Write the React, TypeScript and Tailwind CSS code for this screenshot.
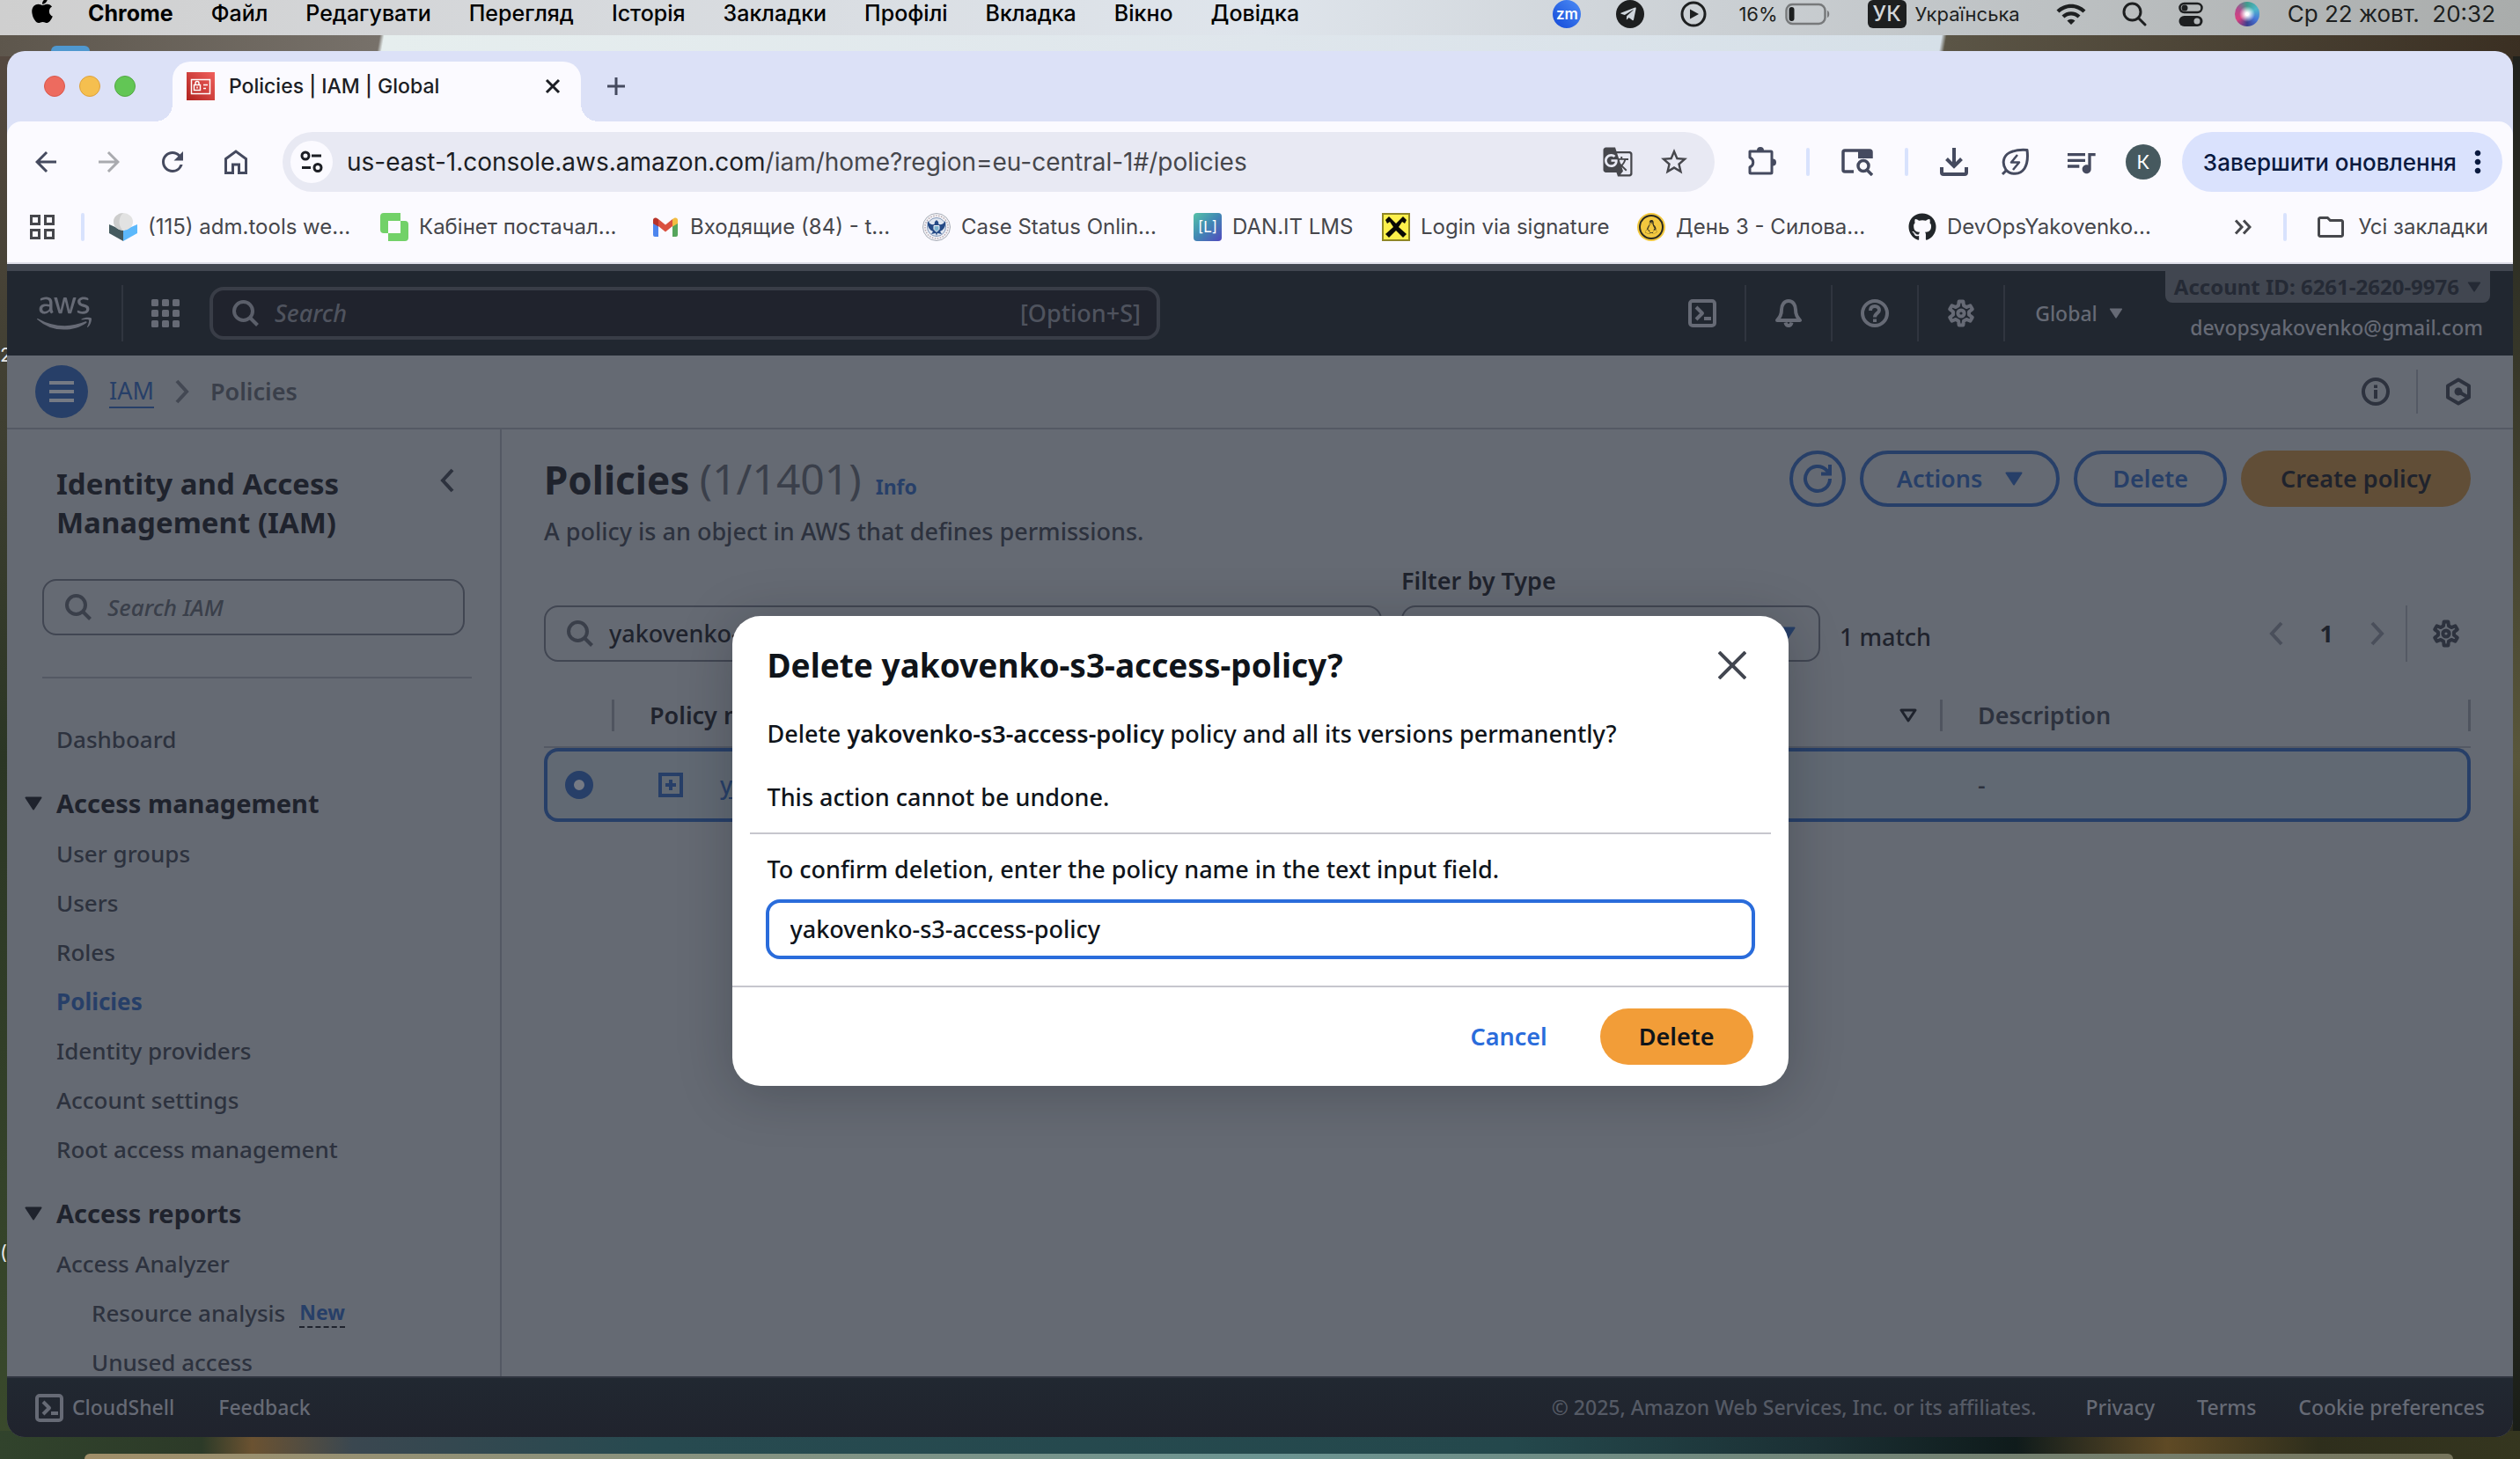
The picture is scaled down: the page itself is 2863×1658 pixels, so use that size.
import React from 'react';
import { FaApple, FaAws, FaGithub, FaLinux, FaTelegramPlane } from 'react-icons/fa';
import {
  MdArrowBack,
  MdArrowForward,
  MdGTranslate,
  MdMoreVert,
  MdOutlineFolder,
  MdQueueMusic,
  MdRefresh,
  MdStarBorder,
  MdWifi,
} from 'react-icons/md';

type IconProps = { className?: string };

const ember = 'font-["Noto_Sans",sans-serif]';
const system = 'font-["Inter",sans-serif]';

function gearPath() {
  const points: string[] = [];
  for (let i = 0; i < 6; i++) {
    for (const [offset, radius] of [[-19, 9.2], [-10, 13.6], [10, 13.6], [19, 9.2]]) {
      const angle = ((i * 60 + offset - 90) * Math.PI) / 180;
      points.push(`${(16 + radius * Math.cos(angle)).toFixed(2)} ${(16 + radius * Math.sin(angle)).toFixed(2)}`);
    }
  }
  return `M${points.join('L')}Z`;
}
const GEAR = gearPath();

const Gear = ({ className }: IconProps) => (
  <svg viewBox="0 0 32 32" className={className} fill="none" stroke="currentColor" strokeWidth="4" strokeLinejoin="round">
    <path d={GEAR} />
    <circle cx="16" cy="16" r="3.6" />
  </svg>
);
const Magnifier = ({ className }: IconProps) => (
  <svg viewBox="0 0 30 30" className={className} fill="none" stroke="currentColor" strokeWidth="4">
    <circle cx="12.5" cy="12.5" r="10.5" />
    <path d="M19.5 19.5L28.5 28.5" />
  </svg>
);
const Caret = ({ className }: IconProps) => (
  <svg viewBox="0 0 20 16" className={className} fill="currentColor" stroke="currentColor" strokeWidth="2" strokeLinejoin="round">
    <path d="M1.5 1.5H18.5L10 14.5Z" />
  </svg>
);
const Chevron = ({ className, left }: IconProps & { left?: boolean }) => (
  <svg viewBox="0 0 16 28" className={className} fill="none" stroke="currentColor" strokeWidth="4">
    <path d={left ? 'M14 2L3 14L14 26' : 'M2 2L13 14L2 26'} />
  </svg>
);
const Shell = ({ className }: IconProps) => (
  <svg viewBox="0 0 32 32" className={className} fill="none" stroke="currentColor" strokeWidth="4" strokeLinejoin="round">
    <rect x="2" y="2" width="28" height="28" rx="3" />
    <path d="M9 9L16 16L9 23M18 22H26" />
  </svg>
);
const Bell = ({ className }: IconProps) => (
  <svg viewBox="0 0 32 32" className={className} fill="none" stroke="currentColor" strokeWidth="4" strokeLinejoin="round">
    <path d="M8 12C8 6.500 11 2 16 2S24 6.500 24 12C24 18 26 20.500 29 24H3C6 20.500 8 18 8 12Z" />
    <path d="M12.500 26.500C13 29 14.500 30 16 30S19 29 19.500 26.500" />
  </svg>
);
const Help = ({ className }: IconProps) => (
  <svg viewBox="0 0 32 32" className={className} fill="none" stroke="currentColor" strokeWidth="4">
    <circle cx="16" cy="16" r="14" />
    <path d="M11 13C11 9.500 13 8 16 8S21 10 21 12.500C21 16 16 16 16 20.500" />
    <path d="M16 22.500V26" />
  </svg>
);
const Info = ({ className }: IconProps) => (
  <svg viewBox="0 0 32 32" className={className} fill="none" stroke="currentColor" strokeWidth="4">
    <circle cx="16" cy="16" r="14" />
    <path d="M16 14V24M16 8.500V12" />
  </svg>
);
const Hexagon = ({ className }: IconProps) => (
  <svg viewBox="0 0 32 32" className={className} fill="none" stroke="currentColor" strokeWidth="4" strokeLinejoin="round">
    <path d="M16 2.500L28 9.500V22.500L16 29.500L4 22.500V9.500Z" />
    <circle cx="16" cy="16" r="4.500" fill="currentColor" stroke="none" />
    <path d="M16 16L27 22.500" />
  </svg>
);
const Reload = ({ className }: IconProps) => (
  <svg viewBox="0 0 34 34" className={className} fill="none" stroke="currentColor" strokeWidth="4">
    <path d="M31 17A14 14 0 1 1 27 7.200L31 11" />
    <path d="M31 1V11.500H21" />
  </svg>
);

const menus = ['Файл', 'Редагувати', 'Перегляд', 'Історія', 'Закладки', 'Профілі', 'Вкладка', 'Вікно', 'Довідка'];

function MenuBar() {
  return (
    <div className={`relative flex h-10 shrink-0 items-start bg-linear-to-r from-[#cfcfcf] via-[#dfe5ec] to-[#a9acab] pr-7 pl-8 text-[25px] leading-[30px] text-black ${system}`}>
      <FaApple className="-mt-1 mr-9 size-8 shrink-0" />
      <div className="flex gap-[43px] font-medium">
        <span className="font-bold">Chrome</span>
        {menus.map((m) => (
          <span key={m}>{m}</span>
        ))}
      </div>
      <div className="ml-auto flex h-8 items-center text-[#1d1f20]">
        <span className="grid size-8 place-items-center rounded-full bg-linear-to-bl from-[#4e8cf5] to-[#1547d8] text-[17px] font-semibold text-white">zm</span>
        <span className="ml-10 grid size-8 place-items-center rounded-full bg-[#1d1f20] text-[#cfd6dd]">
          <FaTelegramPlane className="mr-1 size-5" />
        </span>
        <svg viewBox="0 0 30 30" className="ml-[41px] size-[30px]" fill="none" stroke="currentColor" strokeWidth="3">
          <circle cx="15" cy="15" r="13" />
          <path d="M11 9.500L21 15L11 20.500Z" fill="currentColor" stroke="none" />
        </svg>
        <span className="ml-9 text-[22px]">16%</span>
        <svg viewBox="0 0 52 26" className="ml-2 h-[26px] w-[52px]" fill="none">
          <rect x="1.500" y="2" width="44" height="22" rx="7" stroke="#77797b" strokeWidth="2.500" />
          <rect x="4.500" y="5" width="6" height="16" rx="3" fill="#1d1f20" />
          <path d="M48 9C51 10 51 16 48 17Z" fill="#77797b" />
        </svg>
        <span className="ml-[42px] grid h-8 w-11 place-items-center rounded-md bg-[#1d1f20] text-[24px] font-medium text-[#d3d6d9]">УК</span>
        <span className="ml-[10px] text-[22px]">Українська</span>
        <MdWifi className="mr-1 ml-10 size-9" />
        <svg viewBox="0 0 28 28" className="ml-9 size-7" fill="none" stroke="currentColor" strokeWidth="3" strokeLinecap="round">
          <circle cx="11.500" cy="11.500" r="9.500" />
          <path d="M18.500 18.500L26 26" />
        </svg>
        <svg viewBox="0 0 28 28" className="ml-9 size-7" fill="none" stroke="currentColor" strokeWidth="2.500">
          <rect x="1.500" y="2" width="25" height="10" rx="5" />
          <circle cx="7" cy="7" r="3.500" fill="currentColor" stroke="none" />
          <rect x="0.500" y="16" width="27" height="12" rx="6" fill="currentColor" stroke="none" />
          <circle cx="21" cy="22" r="3.500" fill="#b3b7b9" stroke="none" />
        </svg>
        <span className="ml-9 size-7 rounded-full bg-[radial-gradient(circle,#ffffff_8%,transparent_45%),conic-gradient(#3f9d8d,#4fb7c9,#4676d8,#3a3f8f,#d8407f,#b14b8e,#3f9d8d)]" />
        <span className="ml-8 text-[26px] whitespace-pre">Ср 22 жовт.  20:32</span>
      </div>
    </div>
  );
}

function TabStrip() {
  return (
    <div className="flex h-20 shrink-0 items-end bg-[#dce1f7]">
      <div className="flex h-20 w-42 items-center gap-4 pl-[42px]">
        <button aria-label="Закрити вікно" className="size-6 rounded-full border border-[#d9584c] bg-[#ed6b5f]" />
        <button aria-label="Згорнути" className="size-6 rounded-full border border-[#dea13c] bg-[#f5bf4f]" />
        <button aria-label="Розгорнути" className="size-6 rounded-full border border-[#52a842] bg-[#62c655]" />
      </div>
      <span className="size-5 bg-[radial-gradient(circle_at_0_0,transparent_20px,#fbfaff_20px)]" />
      <div className="flex h-[68px] w-[464px] items-center rounded-t-[20px] bg-[#fbfaff] pr-5 pb-3 pl-4">
        <svg viewBox="0 0 32 32" className="mr-4 size-8" fill="none" stroke="#fff" strokeWidth="1.500">
          <defs>
            <linearGradient id="iam" x1="0" y1="1" x2="1" y2="0">
              <stop offset="0" stopColor="#b0221f" />
              <stop offset="1" stopColor="#f0605c" />
            </linearGradient>
          </defs>
          <rect width="32" height="32" fill="url(#iam)" stroke="none" />
          <rect x="5.500" y="8.500" width="21" height="16" />
          <rect x="8.500" y="14.500" width="7" height="6" />
          <path d="M10 14.500V12.500A2 2 0 0 1 14 12.500V14.500M19 14.500H24M19 18.500H22M12 16.500V18.500" />
        </svg>
        <span className="text-[23px] font-medium text-[#1c1e24]">Policies | IAM | Global</span>
        <button aria-label="Закрити вкладку" className="ml-auto grid size-6 place-items-center text-[#1c1e24]">
          <svg viewBox="0 0 18 18" className="size-[18px]" stroke="currentColor" strokeWidth="3">
            <path d="M2 2L16 16M16 2L2 16" />
          </svg>
        </button>
      </div>
      <span className="size-5 bg-[radial-gradient(circle_at_100%_0,transparent_20px,#fbfaff_20px)]" />
      <button aria-label="Нова вкладка" className="grid h-20 w-10 place-items-center text-[#454a5f]">
        <svg viewBox="0 0 20 20" className="size-5" stroke="currentColor" strokeWidth="3">
          <path d="M10 0V20M0 10H20" />
        </svg>
      </button>
    </div>
  );
}

function Toolbar() {
  return (
    <div className="flex h-[92px] items-center rounded-t-[16px] bg-[#fbfaff] pr-3 pl-6 text-[#454a5f]">
      <button aria-label="Назад" className="grid w-10 place-items-center"><MdArrowBack className="size-9" /></button>
      <button aria-label="Вперед" className="ml-8 grid w-10 place-items-center text-[#a9aaaf]"><MdArrowForward className="size-9" /></button>
      <button aria-label="Оновити" className="ml-8 grid w-10 place-items-center"><MdRefresh className="size-9" /></button>
      <button aria-label="Головна" className="ml-8 grid w-10 place-items-center">
        <svg viewBox="0 0 28 30" className="h-[30px] w-7" fill="none" stroke="currentColor" strokeWidth="3">
          <path d="M2.500 11.500L14 3L25.500 11.500V27.500H17.500V18H10.500V27.500H2.500Z" />
        </svg>
      </button>
      <div className="ml-[33px] flex h-[68px] flex-1 items-center rounded-full bg-[#e8e9f3] pr-7 pl-[9px] text-[#46474c]">
        <button aria-label="Відомості про сайт" className="grid size-12 place-items-center rounded-full bg-[#fbfaff] text-[#1c1e24]">
          <svg viewBox="0 0 26 26" className="size-[26px]" fill="none" stroke="currentColor" strokeWidth="3">
            <circle cx="6" cy="6" r="4" />
            <path d="M13 6H24M2 19.500H12" />
            <circle cx="20" cy="19.500" r="4" />
          </svg>
        </button>
        <div role="textbox" aria-label="Адреса" className="ml-4 flex-1 text-[28px]">
          <span className="text-[#1c1e24]">us-east-1.console.aws.amazon.com</span>/iam/home?region=eu-central-1#/policies
        </div>
        <button aria-label="Перекласти"><MdGTranslate className="size-9" /></button>
        <button aria-label="Додати закладку" className="ml-7"><MdStarBorder className="size-9" /></button>
      </div>
      <button aria-label="Розширення" className="ml-9">
        <svg viewBox="0 0 36 36" className="size-9" fill="none" stroke="currentColor" strokeWidth="3" strokeLinejoin="round">
          <path d="M4 6H28Q29 6 29 7V30Q29 31 28 31H5Q4 31 4 30V24C9 22 9 15 4 13Z" />
          <path d="M12 5A4 4 0 0 1 20 5ZM30 14.500A4 4 0 0 1 30 22.500Z" fill="currentColor" stroke="none" />
        </svg>
      </button>
      <span className="ml-8 h-8 w-1 rounded bg-[#d8e2fd]" />
      <button aria-label="Пошук на бічній панелі" className="ml-9">
        <svg viewBox="0 0 36 32" className="h-8 w-9" fill="none" stroke="currentColor" strokeWidth="3.500">
          <path d="M14 27H4Q2 27 2 25V5Q2 3 4 3H32Q34 3 34 5V12" />
          <path d="M19 2H34V12H19Z" fill="currentColor" stroke="none" />
          <circle cx="25" cy="20.500" r="6" />
          <path d="M29 25L35 31" />
        </svg>
      </button>
      <span className="ml-9 h-8 w-1 rounded bg-[#d8e2fd]" />
      <button aria-label="Завантаження" className="ml-9">
        <svg viewBox="0 0 32 32" className="size-8" fill="none" stroke="currentColor" strokeWidth="4">
          <path d="M16 0V20M7.500 12.500L16 21L24.500 12.500M2 22V28Q2 30 4 30H28Q30 30 30 28V22" />
        </svg>
      </button>
      <button aria-label="Заощадження енергії" className="ml-9">
        <svg viewBox="0 0 36 36" className="size-9" fill="none" stroke="currentColor" strokeWidth="3" strokeLinejoin="round">
          <path d="M31 4.500C32 12 32 19 28 25.500C23 33 12 33 7 27C2 20 4 11 11 7.500C17 4.500 24 4 31 4.500Z" />
          <path d="M3 32L8 27" />
          <path d="M20 10L13 18.500H22L15 27" strokeWidth="2.500" />
        </svg>
      </button>
      <button aria-label="Керування медіа" className="ml-9"><MdQueueMusic className="size-10" /></button>
      <button aria-label="Профіль" className="ml-[31px] grid size-10 place-items-center rounded-full bg-[#46595f] text-[22px] text-white">К</button>
      <button className="ml-6 flex h-[68px] items-center rounded-full bg-[#dae2fd] pr-2 pl-6 text-[26px] font-medium text-[#0a1a3f]">
        Завершити оновлення
        <MdMoreVert className="ml-1 size-10" />
      </button>
    </div>
  );
}

function SealIcon() {
  return (
    <svg viewBox="0 0 32 32" className="size-8" fill="none">
      <circle cx="16" cy="16" r="15.500" fill="#f3f4f7" stroke="#a8adb8" />
      <circle cx="16" cy="16" r="13" stroke="#b9a9b1" strokeWidth="1.500" strokeDasharray="1.500 1.500" />
      <circle cx="16" cy="16" r="10.500" fill="#dfe6f0" stroke="#8296b8" />
      <path d="M6 9C8 13 11 13.500 13.500 13L14 10L16 8L18 10L18.500 13C21 13.500 24 13 26 9C27 14 25 19 20 21L22 24L17 23L16 26L15 23L10 24L12 21C7 19 5 14 6 9Z" fill="#254a86" />
      <path d="M13 14.500H19V18.500L16 21.500L13 18.500Z" fill="#7fb3cf" stroke="#f3f4f7" />
    </svg>
  );
}

const bookmarks: { label: string; width: string; icon: React.ReactNode }[] = [
  {
    label: '(115) adm.tools we...',
    width: 'w-[308px]',
    icon: (
      <svg viewBox="0 0 32 32" className="size-8">
        <path d="M0 13L16 20V32L0 23Z" fill="#455a5f" />
        <path d="M32 13L16 20V32L32 23Z" fill="#5cb8fb" />
        <ellipse cx="16" cy="10" rx="11" ry="10" fill="#e2e2e2" />
        <path d="M16 0A11 10 0 0 0 16 20C10 15 10 5 16 0Z" fill="#cdcdcd" />
      </svg>
    ),
  },
  {
    label: 'Кабінет постачал...',
    width: 'w-[308px]',
    icon: (
      <svg viewBox="0 0 32 32" className="size-8">
        <path d="M4 0H23V9H28Q32 9 32 13V28Q32 32 28 32H9V23H4Q0 23 0 19V4Q0 0 4 0Z" fill="#72d168" />
        <rect x="9" y="9" width="14" height="14" fill="#fbfaff" />
      </svg>
    ),
  },
  {
    label: 'Входящие (84) - t...',
    width: 'w-[308px]',
    icon: (
      <svg viewBox="0 0 32 32" className="size-8">
        <path d="M2 8L8 12V27H4Q2 27 2 25Z" fill="#4d85ee" />
        <path d="M30 8L24 12V27H28Q30 27 30 25Z" fill="#56a55c" />
        <path d="M8 7L16 13.500L24 7V15L16 21.500L8 15Z" fill="#da5140" />
        <path d="M2 12V8C2 5 5.500 4.500 8 7V15.500Z" fill="#b8332a" />
        <path d="M30 12V8C30 5 26.500 4.500 24 7V15.500Z" fill="#f2bd42" />
      </svg>
    ),
  },
  { label: 'Case Status Onlin...', width: 'w-[308px]', icon: <SealIcon /> },
  {
    label: 'DAN.IT LMS',
    width: 'w-[214px]',
    icon: <span className="grid size-8 place-items-center rounded bg-linear-to-br from-[#57c2a6] via-[#4186b4] to-[#4f46bd] text-[17px] leading-none text-white">[L]</span>,
  },
  {
    label: 'Login via signature',
    width: 'w-[290px]',
    icon: (
      <svg viewBox="0 0 32 32" className="size-8">
        <rect x="1" y="1" width="30" height="30" fill="#fdf04b" stroke="#8f8626" strokeWidth="2" />
        <path d="M8 4L16 12L24 4L28 8L26 12L23 10L19 16L28 24L24 28L16 20L8 28L4 24L13 16L9 10L6 12L4 8Z" fill="#0a0a05" />
      </svg>
    ),
  },
  {
    label: 'День 3 - Силова...',
    width: 'w-[308px]',
    icon: (
      <span className="grid size-8 place-items-center rounded-full bg-[#f2c83f]">
        <span className="grid size-7 place-items-center rounded-full border-2 border-[#2a2a20]">
          <FaLinux className="size-4 text-[#2a2a20]" />
        </span>
      </span>
    ),
  },
  { label: 'DevOpsYakovenko...', width: 'w-[308px]', icon: <FaGithub className="size-8 text-[#22262a]" /> },
];

function BookmarksBar() {
  return (
    <div className="flex h-[70px] items-center border-b-2 border-[#dfdfe9] bg-[#fbfaff] pr-7 pb-3 pl-[26px] text-[24px] text-[#46474c]">
      <button aria-label="Групи вкладок">
        <svg viewBox="0 0 28 28" className="size-7" fill="none" stroke="currentColor" strokeWidth="3">
          <path d="M1.500 1.500H10.500V10.500H1.500ZM17.500 1.500H26.500V10.500H17.500ZM1.500 17.500H10.500V26.500H1.500ZM17.500 17.500H26.500V26.500H17.500Z" />
        </svg>
      </button>
      <span className="mr-7 ml-[30px] h-8 w-1 rounded bg-[#d8e2fd]" />
      {bookmarks.map((b) => (
        <a key={b.label} href="#bookmark" className={`flex shrink-0 items-center gap-3 whitespace-nowrap ${b.width}`}>
          <span className="shrink-0">{b.icon}</span>
          {b.label}
        </a>
      ))}
      <button aria-label="Інші закладки" className="ml-auto">
        <svg viewBox="0 0 20 18" className="h-[18px] w-5" fill="none" stroke="currentColor" strokeWidth="3">
          <path d="M2 1.500L9 9L2 16.500M11 1.500L18 9L11 16.500" />
        </svg>
      </button>
      <span className="mr-8 ml-9 h-8 w-1 rounded bg-[#d8e2fd]" />
      <button className="flex items-center gap-[14px] whitespace-nowrap">
        <MdOutlineFolder className="size-9" />
        Усі закладки
      </button>
    </div>
  );
}

function ConsoleNav() {
  const cell = 'grid h-16 w-[98px] place-items-center border-r-2 border-[#30353f]';
  return (
    <header className="flex h-26 shrink-0 items-center border-t-8 border-[#414650] bg-[#212730] pr-[26px] pl-[34px] text-[#666a75]">
      <a href="#home" aria-label="aws"><FaAws className="h-[50px] w-[62px]" /></a>
      <span className="ml-[34px] h-16 w-0.5 bg-[#30353f]" />
      <button aria-label="Services" className="ml-8">
        <svg viewBox="0 0 32 32" className="size-8" fill="currentColor">
          {[0, 12, 24].map((y) => [0, 12, 24].map((x) => <rect key={`${x}-${y}`} x={x} y={y} width="8" height="8" rx="1.500" />))}
        </svg>
      </button>
      <label className="ml-[34px] flex h-15 w-[1080px] items-center rounded-2xl border-4 border-[#393d47] bg-[#20232d] pr-[18px] pl-[22px] text-[27px] text-[#4f535e]">
        <Magnifier className="size-[30px] shrink-0 text-[#5b5f6a]" />
        <input aria-label="Search" placeholder="Search" className="ml-[18px] min-w-0 flex-1 bg-transparent italic outline-none placeholder:text-[#4f535e]" />
        [Option+S]
      </label>
      <div className="ml-auto flex items-center">
        <button aria-label="CloudShell" className={cell}><Shell className="size-8" /></button>
        <button aria-label="Notifications" className={cell}><Bell className="size-8" /></button>
        <button aria-label="Help" className={cell}><Help className="size-8" /></button>
        <button aria-label="Settings" className={cell}><Gear className="size-8" /></button>
        <button className="flex items-center gap-[13px] pl-[34px] text-[23px]">
          Global
          <Caret className="h-3 w-4" />
        </button>
      </div>
      <div className="ml-12 flex flex-col items-end self-start text-[23px]">
        <button className="flex h-9 items-center gap-[9px] rounded-b-lg bg-[#414650] px-[10px] text-[24px] font-bold text-[#252a35]">
          Account ID: 6261-2620-9976
          <Caret className="h-3 w-4" />
        </button>
        <span className="mt-3 pr-2 leading-8">devopsyakovenko@gmail.com</span>
      </div>
    </header>
  );
}

function Breadcrumbs() {
  return (
    <div className="flex h-21 shrink-0 items-center border-b-2 border-[#545964] pr-[46px] pl-8 text-[27px]">
      <button aria-label="Toggle navigation" className="grid size-15 place-items-center rounded-full bg-[#273f68] text-[#757a84]">
        <svg viewBox="0 0 28 24" className="h-6 w-7" stroke="currentColor" strokeWidth="4">
          <path d="M0 2H28M0 12H28M0 22H28" />
        </svg>
      </button>
      <nav className="ml-6 flex items-center">
        <a href="#iam" className="border-b-2 border-[#273f68] leading-9 font-normal text-[#273f68]">IAM</a>
        <Chevron className="mx-6 h-7 w-4 text-[#434853]" />
        <span className="font-semibold text-[#3a3f4a]">Policies</span>
      </nav>
      <button aria-label="Info panel" className="ml-auto text-[#2d323e]"><Info className="size-8" /></button>
      <span className="mx-[30px] h-[50px] w-0.5 bg-[#545964]" />
      <button aria-label="Amazon Q" className="text-[#2d323e]"><Hexagon className="size-8" /></button>
    </div>
  );
}

function SideLink({ children, active, nested }: { children: React.ReactNode; active?: boolean; nested?: boolean }) {
  return (
    <a
      href="#section"
      className={`flex h-14 items-center ${nested ? 'pl-24' : 'pl-14'} ${active ? 'font-bold text-[#273f68]' : 'text-[#2d323e]'}`}
    >
      {children}
    </a>
  );
}

function SideGroup({ title, children }: { title: string; children: React.ReactNode }) {
  return (
    <section className="mt-4">
      <button className="flex h-[58px] items-center pl-5 text-[29px] font-bold text-[#1f232d]">
        <Caret className="mr-4 h-4 w-5" />
        {title}
      </button>
      {children}
    </section>
  );
}

function Sidebar() {
  return (
    <aside className="w-[562px] shrink-0 overflow-hidden border-r-2 border-[#545964] text-[26px]">
      <div className="flex items-start justify-between pt-10 pr-[52px] pl-14">
        <h2 className="w-90 text-[33px] leading-11 font-bold text-[#1f232d]">Identity and Access Management (IAM)</h2>
        <button aria-label="Close navigation" className="mt-1 text-[#2d323e]"><Chevron left className="h-7 w-4" /></button>
      </div>
      <label className="mx-10 mt-[42px] flex h-16 items-center rounded-2xl border-2 border-[#414652] px-6 text-[#3a3f4a]">
        <Magnifier className="size-[30px] shrink-0" />
        <input aria-label="Search IAM" placeholder="Search IAM" className="ml-[18px] min-w-0 flex-1 bg-transparent italic outline-none placeholder:text-[#3a3f4a]" />
      </label>
      <hr className="mt-[47px] mr-8 mb-[41px] ml-10 border-t-2 border-[#545964]" />
      <nav>
        <SideLink>Dashboard</SideLink>
        <SideGroup title="Access management">
          <SideLink>User groups</SideLink>
          <SideLink>Users</SideLink>
          <SideLink>Roles</SideLink>
          <SideLink active>Policies</SideLink>
          <SideLink>Identity providers</SideLink>
          <SideLink>Account settings</SideLink>
          <SideLink>Root access management</SideLink>
        </SideGroup>
        <SideGroup title="Access reports">
          <SideLink>Access Analyzer</SideLink>
          <SideLink nested>
            Resource analysis
            <span className="ml-4 border-b-2 border-dashed border-[#1f232d] text-[23px] leading-8 font-bold text-[#273f68]">New</span>
          </SideLink>
          <SideLink nested>Unused access</SideLink>
        </SideGroup>
      </nav>
    </aside>
  );
}

function PoliciesPage() {
  const outline = 'flex h-16 items-center rounded-full border-4 border-[#273f68]';
  return (
    <main className="min-w-0 flex-1 px-12 pt-6 text-[27px] text-[#2d323e]">
      <div className="flex items-start justify-between">
        <div>
          <div className="flex h-16 items-baseline leading-16">
            <h1 className="text-[44px] font-bold text-[#1f232d]">
              Policies <span className="text-[48px] font-normal text-[#3a3f4a]">(1/1401)</span>
            </h1>
            <a href="#info" className="ml-4 text-[23px] font-bold text-[#273f68]">Info</a>
          </div>
          <p className="mt-2 leading-10">A policy is an object in AWS that defines permissions.</p>
        </div>
        <div className="flex gap-4 font-semibold text-[#273f68]">
          <button aria-label="Refresh" className={`${outline} w-16 justify-center`}><Reload className="size-[34px]" /></button>
          <button className={`${outline} gap-[26px] px-[38px]`}>
            Actions
            <Caret className="h-4 w-5" />
          </button>
          <button className={`${outline} px-10`}>Delete</button>
          <button className="h-16 rounded-full bg-[#614e37] px-[45px] text-[#1f232d]">Create policy</button>
        </div>
      </div>

      <div className="mt-4 flex items-end">
        <label className="flex h-16 w-[952px] items-center rounded-2xl border-2 border-[#414652] px-6 text-[#1f232d]">
          <Magnifier className="size-[30px] shrink-0 text-[#3a3f4a]" />
          <input aria-label="Search policies" defaultValue="yakovenko-s3-access-policy" className="ml-[18px] min-w-0 flex-1 bg-transparent outline-none" />
        </label>
        <div className="ml-[22px] w-[476px]">
          <label htmlFor="type" className="mb-2 block leading-10 font-semibold text-[#1f232d]">Filter by Type</label>
          <div className="relative">
            <select id="type" className="block h-16 w-full appearance-none rounded-2xl border-2 border-[#414652] bg-transparent px-6">
              <option>All types</option>
            </select>
            <Caret className="pointer-events-none absolute top-6 right-7 h-4 w-5 text-[#273f68]" />
          </div>
        </div>
        <span className="ml-[22px] leading-14 text-[#1f232d]">1 match</span>
        <div className="ml-auto flex h-16 items-center pr-3 text-[#2d323e]">
          <button aria-label="Previous page" className="text-[#4a4f5b]"><Chevron left className="h-7 w-4" /></button>
          <span className="mx-[42px] font-bold text-[#1f232d]">1</span>
          <button aria-label="Next page" className="text-[#4a4f5b]"><Chevron className="h-7 w-4" /></button>
          <span className="mr-7 ml-6 h-16 w-0.5 bg-[#545964]" />
          <button aria-label="Preferences"><Gear className="size-8" /></button>
        </div>
      </div>

      <table className="mt-[26px] w-full table-fixed border-separate border-spacing-0 text-left">
        <thead>
          <tr className="h-[72px] font-semibold">
            <th className="w-[80px] border-b-2 border-[#545964] p-0"><div className="h-9 border-r-3 border-[#4f545f]" /></th>
            <th className="border-b-2 border-[#545964] p-0">
              <div className="flex h-9 items-center justify-between border-r-3 border-[#4f545f] pr-[26px] pl-10 font-semibold text-[#1f232d]">
                Policy name
                <svg viewBox="0 0 20 16" className="h-4 w-5" fill="none" stroke="currentColor" strokeWidth="3" strokeLinejoin="round">
                  <path d="M2 2H18L10 14Z" />
                </svg>
              </div>
            </th>
            <th className="w-[600px] border-b-2 border-[#545964] p-0">
              <div className="flex h-9 items-center border-r-3 border-[#4f545f] pl-10 font-semibold">Description</div>
            </th>
          </tr>
        </thead>
        <tbody>
          <tr className="h-[84px] bg-[#616973]">
            <td className="rounded-l-2xl border-y-4 border-l-4 border-[#273f68] p-0 pl-5">
              <input type="radio" name="policy" aria-label="yakovenko-s3-access-policy" defaultChecked className="block size-8 appearance-none rounded-full border-10 border-[#273f68] bg-[#757a84]" />
            </td>
            <td className="border-y-4 border-[#273f68] p-0 pl-[50px]">
              <div className="flex items-center text-[#273f68]">
                <button aria-label="Expand policy">
                  <svg viewBox="0 0 28 28" className="size-7" fill="none" stroke="currentColor" strokeWidth="4">
                    <path d="M2 2H26V26H2ZM14 8V20M8 14H20" />
                  </svg>
                </button>
                <a href="#policy" className="ml-[42px] underline underline-offset-4">yakovenko-s3-access-policy</a>
              </div>
            </td>
            <td className="rounded-r-2xl border-y-4 border-r-4 border-[#273f68] p-0 pl-10">-</td>
          </tr>
        </tbody>
      </table>
    </main>
  );
}

function DeleteDialog() {
  return (
    <div className="absolute inset-0 grid place-items-center">
      <div role="dialog" aria-labelledby="dialog-title" className="w-[1200px] rounded-[32px] bg-white text-[27px] leading-11 text-[#0f141a] shadow-[0_8px_60px_rgba(15,20,26,0.25)]">
        <div className="flex items-center justify-between px-10 pt-8">
          <h2 id="dialog-title" className="text-[37px] leading-12 font-bold">Delete yakovenko-s3-access-policy?</h2>
          <button aria-label="Close" className="mr-2 text-[#424650]">
            <svg viewBox="0 0 32 32" className="size-8" stroke="currentColor" strokeWidth="4">
              <path d="M1 1L31 31M31 1L1 31" />
            </svg>
          </button>
        </div>
        <p className="mt-8 px-10">
          Delete <b className="font-semibold">yakovenko-s3-access-policy</b> policy and all its versions permanently?
        </p>
        <p className="mt-7 px-10">This action cannot be undone.</p>
        <hr className="mx-5 my-[18px] border-t-2 border-[#c6c6cd]" />
        <label htmlFor="confirm" className="block px-10">To confirm deletion, enter the policy name in the text input field.</label>
        <div className="px-[38px] pt-3 pb-[30px]">
          <input id="confirm" defaultValue="yakovenko-s3-access-policy" className="block h-[68px] w-full rounded-2xl border-4 border-[#2a6cdb] px-6 outline-none" />
        </div>
        <div className="flex items-center justify-end border-t-2 border-[#c6c6cd] px-10 py-6 font-semibold">
          <button className="mr-15 text-[#2a6cdb]">Cancel</button>
          <button className="h-16 rounded-full bg-[#f29d38] px-11">Delete</button>
        </div>
      </div>
    </div>
  );
}

function Footer() {
  return (
    <footer className="flex h-[69px] shrink-0 items-center border-t-2 border-[#303540] bg-linear-to-b from-[#212831] to-[#20232d] pr-8 pl-8 text-[23px] text-[#666a75]">
      <button className="flex items-center gap-[10px]"><Shell className="size-8" />CloudShell</button>
      <a href="#feedback" className="ml-[50px]">Feedback</a>
      <span className="ml-auto text-[#555a65]">© 2025, Amazon Web Services, Inc. or its affiliates.</span>
      <a href="#privacy" className="ml-14">Privacy</a>
      <a href="#terms" className="ml-12">Terms</a>
      <a href="#cookies" className="ml-12">Cookie preferences</a>
    </footer>
  );
}

export default function App() {
  return (
    <div className="relative flex h-screen flex-col overflow-hidden bg-linear-to-r from-[#3a3d2c] via-[#26454a] to-[#2b2a1c]">
      <div className="absolute inset-x-0 top-10 h-8 bg-[linear-gradient(100deg,#5d564c_0,#77716a_425px,#e6eeee_430px,#dfe6ec_50%,#d6e0e8_76.9%,#5b5546_77.1%,#3a2f22_100%)]" />
      <div className="absolute top-[52px] left-[58px] h-4 w-11 rounded-md bg-[#4f98cf]" />
      <div className={`absolute top-16 bottom-0 left-0 w-4 bg-linear-to-b from-[#54483f] via-[#2b3624] to-[#3a4a2c] text-[22px] leading-8 text-[#e6e6e6] ${system}`}>
        <div className="mt-[323px]">2</div>
        <div className="mt-[988px]">(</div>
      </div>
      <div className="absolute top-16 right-0 bottom-0 w-2 bg-linear-to-b from-[#1f211c] via-[#59563a] to-[#171b16]" />
      <div className="absolute inset-x-0 bottom-0 h-8 bg-[linear-gradient(90deg,#31432c_0,#2c3a28_8%,#6b5231_10%,#3a4750_14%,#274a50_26%,#24484c_60%,#1b3034_72%,#0f1b1b_80%,#5f4a25_86%,#2e2e1c_92%,#35361f_100%)]" />
      <div className="absolute bottom-0 left-24 h-1.5 w-[94%] rounded-t-full bg-linear-to-r from-[#a08e68] via-[#6b9492] to-[#77755c]" />
      <MenuBar />
      <div className={`relative mx-2 mt-[18px] mb-[25px] flex min-h-0 flex-1 flex-col overflow-hidden rounded-[20px] ${system}`}>
        <TabStrip />
        <div className="shrink-0 bg-[#dce1f7]">
          <Toolbar />
          <BookmarksBar />
        </div>
        <div className={`relative flex min-h-0 flex-1 flex-col bg-[#656a73] font-medium ${ember}`}>
          <ConsoleNav />
          <Breadcrumbs />
          <div className="flex min-h-0 flex-1">
            <Sidebar />
            <PoliciesPage />
          </div>
          <Footer />
          <DeleteDialog />
        </div>
      </div>
    </div>
  );
}
